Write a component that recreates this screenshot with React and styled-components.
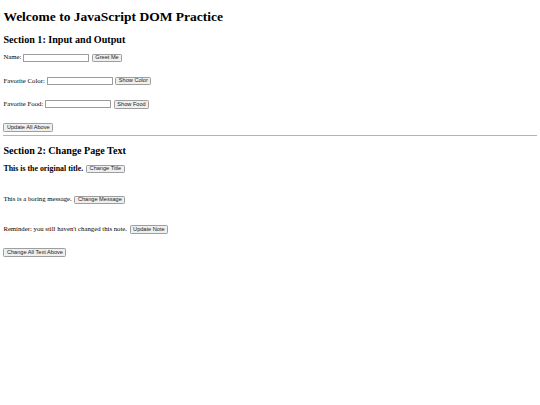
import React from 'react';
import styled, { createGlobalStyle } from 'styled-components';

// The reference is a plain, default-styled page shot at 1280px and shrunk to 540px,
// so the page keeps browser-like sizes and is zoomed down as a whole.
// HAIR is one device pixel inside the zoomed page.
const HAIR = '2.37px';

const GlobalStyle = createGlobalStyle`
html, body {
  margin:0;
  padding:0;
  background:#fff;
}
`

const Page = styled.div`
zoom:0.421875;
margin:8px;
font-family:"Liberation Serif", "Times New Roman", serif;
font-size:16px;
color:#000;
`

const Title = styled.h1`
font-size:32px;
font-weight:bold;
margin:21.44px 0;
`

const SectionTitle = styled.h2`
font-size:24px;
font-weight:bold;
margin:19.92px 0;
`

const Field = styled.div`
margin-bottom:${p => (p.last ? '0' : '34.5px')};
`

const TextInput = styled.input`
box-sizing:border-box;
width:157px;
height:19px;
padding:0 2px;
margin:0;
vertical-align:middle;
border:${HAIR} solid #9c9c9c;
border-radius:1px;
background:#fff;
font:13.333px "Liberation Sans", Arial, sans-serif;
`

const Button = styled.button`
box-sizing:border-box;
height:20px;
padding:0 6px;
margin:0 0 0 2px;
vertical-align:middle;
border:${HAIR} solid #9e9e9e;
border-radius:3px;
background:#efefef;
color:#222;
font:13.333px "Liberation Sans", Arial, sans-serif;
line-height:1;
`

const Divider = styled.hr`
margin:8px 0;
height:0;
border:none;
border-top:${HAIR} solid #b4b4b4;
`

const SubTitle = styled.h3`
font-size:18.72px;
font-weight:bold;
margin:18.72px 0;
`

const Note = styled.p`
margin:${p => p.gap}px 0 0;
`

const App = () => {
  return (
    <>
      <GlobalStyle />
      <Page>
        <Title>Welcome to JavaScript DOM Practice</Title>

        <SectionTitle>Section 1: Input and Output</SectionTitle>
        <Field>
          <label>Name: </label><TextInput type="text" /> <Button>Greet Me</Button>
        </Field>
        <Field>
          <label>Favorite Color: </label><TextInput type="text" /> <Button>Show Color</Button>
        </Field>
        <Field>
          <label>Favorite Food: </label><TextInput type="text" /> <Button>Show Food</Button>
        </Field>
        <Field last>
          <Button style={{ marginLeft: 0 }}>Update All Above</Button>
        </Field>

        <Divider />

        <SectionTitle>Section 2: Change Page Text</SectionTitle>
        <SubTitle>
          This is the original title. <Button>Change Title</Button>
        </SubTitle>
        <Note gap={52}>
          This is a boring message. <Button>Change Message</Button>
        </Note>
        <Note gap={50}>
          Reminder: you still haven't changed this note. <Button>Update Note</Button>
        </Note>
        <Note gap={34}>
          <Button style={{ marginLeft: 0 }}>Change All Text Above</Button>
        </Note>
      </Page>
    </>
  );
};

export default App;
